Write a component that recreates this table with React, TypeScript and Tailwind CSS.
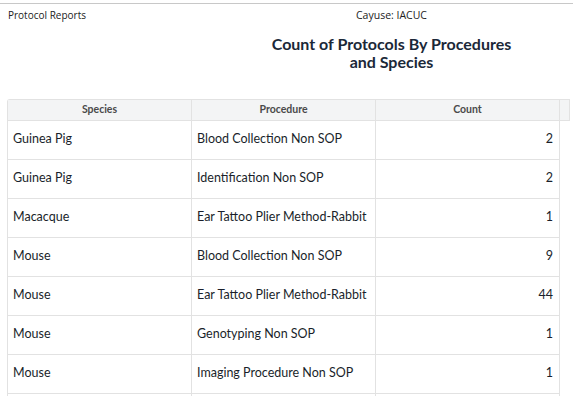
import React from "react";

const rows: [string, string, string][] = [
  ["Guinea Pig", "Blood Collection Non SOP", "2"],
  ["Guinea Pig", "Identification Non SOP", "2"],
  ["Macacque", "Ear Tattoo Plier Method-Rabbit", "1"],
  ["Mouse", "Blood Collection Non SOP", "9"],
  ["Mouse", "Ear Tattoo Plier Method-Rabbit", "44"],
  ["Mouse", "Genotyping Non SOP", "1"],
  ["Mouse", "Imaging Procedure Non SOP", "1"],
  ["", "", ""],
];

export default function App() {
  return (
    <div className="w-[573px] h-[396px] overflow-hidden bg-white" style={{ fontFamily: "Lato, sans-serif" }}>
      <div className="mt-[3px] border-t border-[#c8c8c8]" />
      <div className="flex">
        <div className="w-[210px] pl-[8px] pt-[4px] text-[10px] leading-[14px] text-[#222]" style={{ fontFamily: "'Open Sans', sans-serif" }}>
          Protocol Reports
        </div>
        <div className="flex-1 flex flex-col items-center">
          <div className="pt-[4px] text-[10.5px] leading-[14px] text-[#222]" style={{ fontFamily: "'Open Sans', sans-serif" }}>
            Cayuse: IACUC
          </div>
          <div className="mt-[13px] text-center text-[16px] leading-[18px] font-bold text-[#1b2838]">
            Count of Protocols By Procedures
            <br />
            and Species
          </div>
        </div>
      </div>
      <div className="mt-[28px] ml-[7px] w-[563px] border-l border-t border-[#e2e2e2] rounded-tl-[3px]">
        <div className="flex h-[21px] bg-[#f3f4f5] border-b border-[#e2e2e2] text-[10.5px] font-bold text-[#4a4a4a]">
          <div className="w-[184px] flex items-center justify-center border-r border-[#e2e2e2]">Species</div>
          <div className="w-[184px] flex items-center justify-center border-r border-[#e2e2e2]">Procedure</div>
          <div className="w-[184px] flex items-center justify-center border-r border-[#e2e2e2]">Count</div>
          <div className="flex-1 border-r border-[#e2e2e2]" />
        </div>
        {rows.map((r, i) => (
          <div key={i} className="flex h-[39px] text-[12.5px] text-[#1a1f2b]">
            <div className="w-[184px] flex items-center pl-[5px] pb-[1px] border-r border-b border-[#e2e2e2]">{r[0]}</div>
            <div className="w-[184px] flex items-center pl-[5px] pb-[1px] border-r border-b border-[#e2e2e2]">{r[1]}</div>
            <div className="w-[184px] flex items-center justify-end pr-[6px] pb-[1px] border-r border-b border-[#e2e2e2]">{r[2]}</div>
          </div>
        ))}
      </div>
    </div>
  );
}
